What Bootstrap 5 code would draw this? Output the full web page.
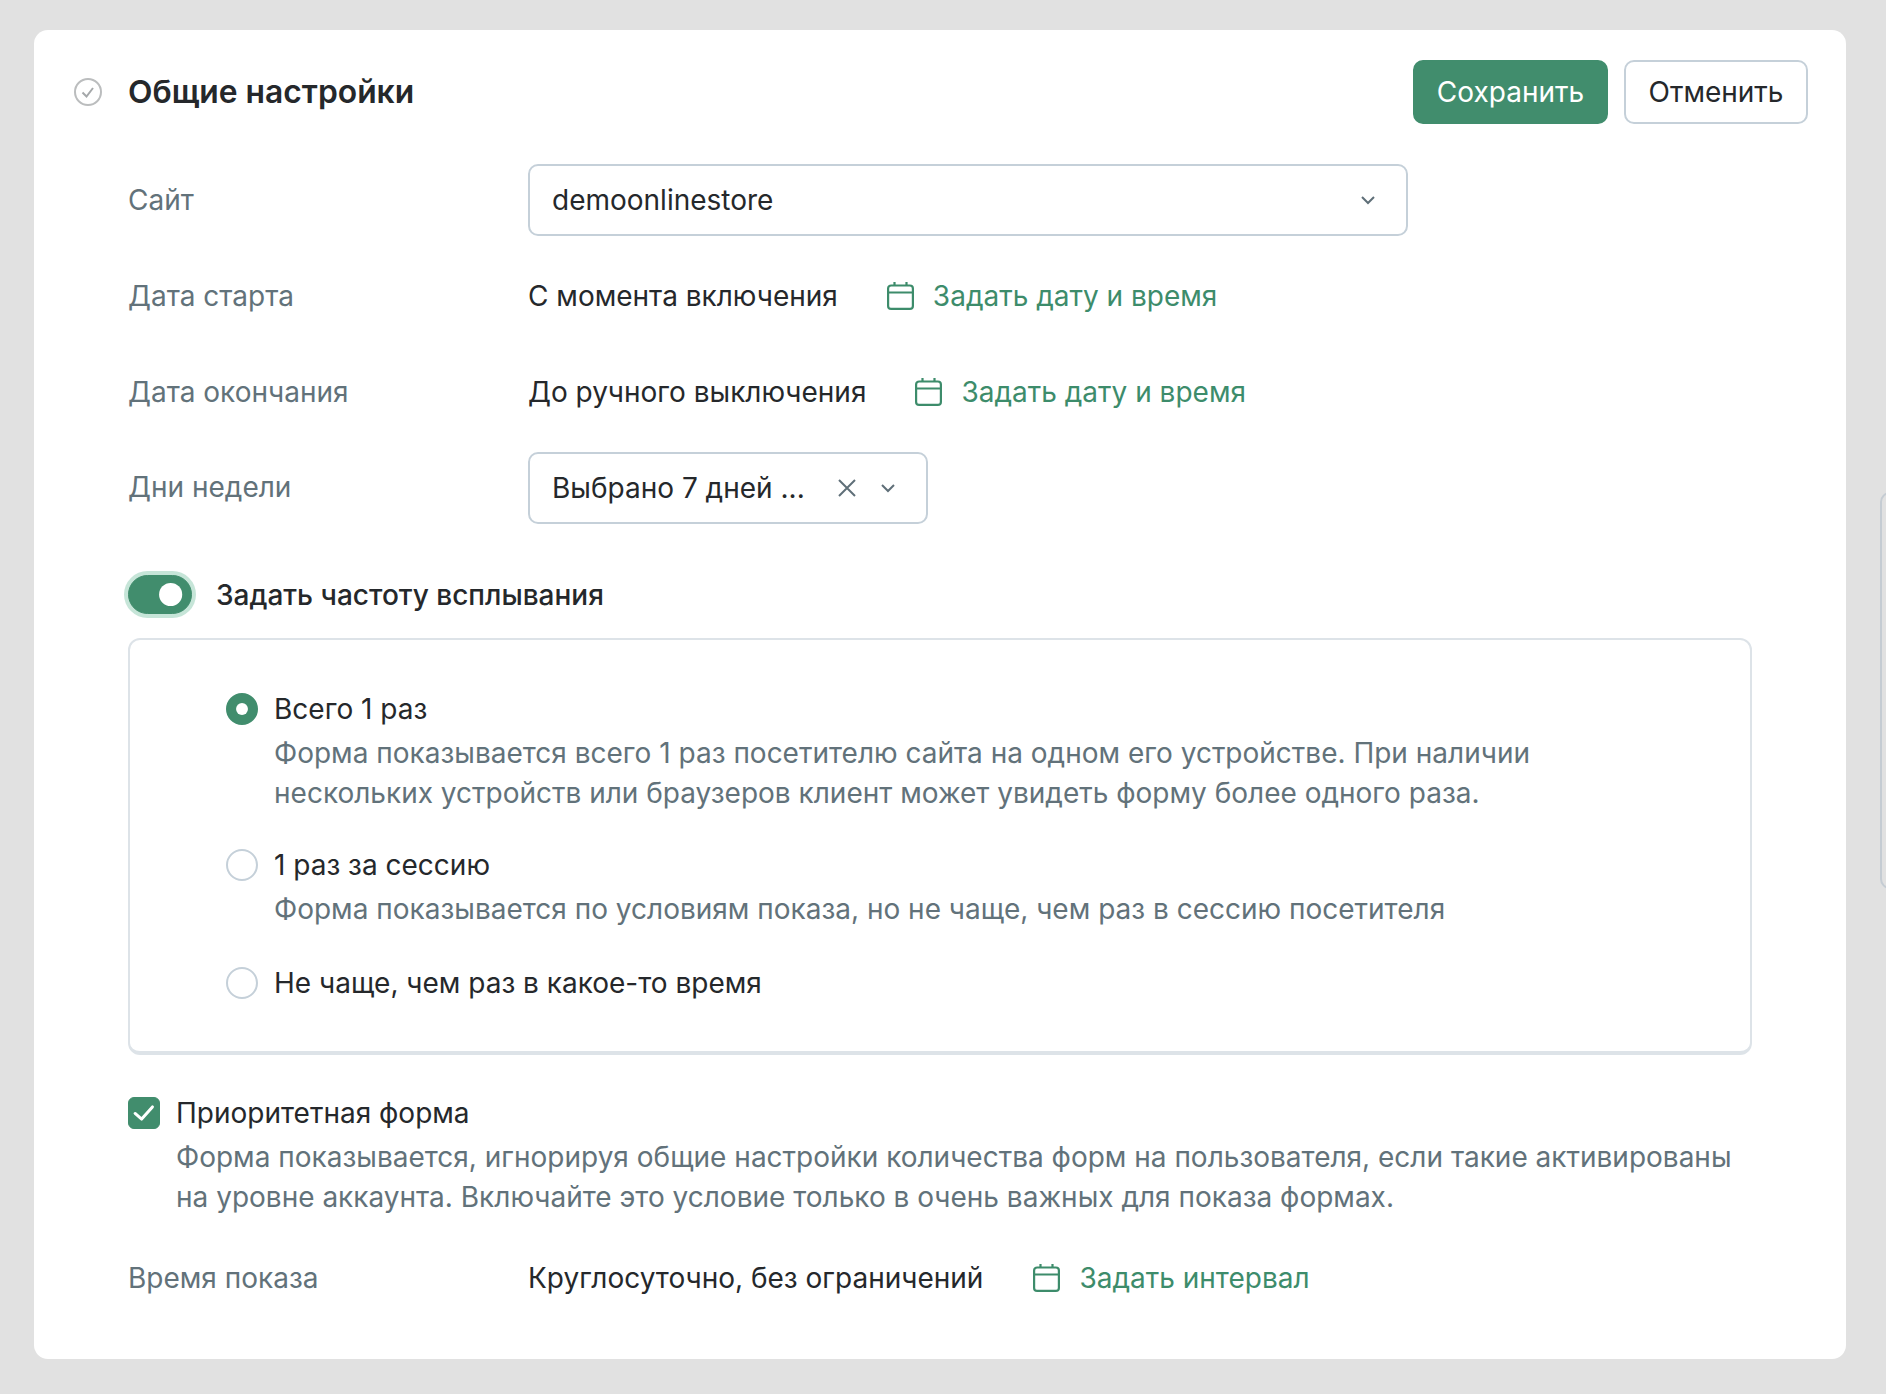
<!DOCTYPE html>
<html lang="ru">
  <head>
    <meta charset="UTF-8" />
    <meta name="viewport" content="width=device-width, initial-scale=1.0" />
    <title>Общие настройки</title>
    <link href="https://cdn.jsdelivr.net/npm/bootstrap@5.3.0/dist/css/bootstrap.min.css" rel="stylesheet" />
    <style>
      body {
        background-color: #e1e1e1;
        font-family: Inter, "Liberation Sans", sans-serif;
        font-size: 28px;
        line-height: 40px;
        color: #25282b;
        min-height: 1394px;
        overflow: hidden;
        position: relative;
      }
      .page-wrap {
        padding: 30px 40px 35px 34px;
      }
      .settings-card {
        background: #fff;
        border-radius: 14px;
        height: 1329px;
        padding: 30px 38px 0 39px;
      }
      .status-icon {
        width: 30px;
        height: 30px;
        margin-right: 25px;
        flex: none;
      }
      .card-title-text {
        font-size: 31.8px;
        font-weight: 600;
        line-height: 64px;
      }
      .btn-save,
      .btn-cancel {
        height: 64px;
        font-size: 28px;
        border-radius: 10px;
        padding: 0 20px;
        line-height: 60px;
      }
      .btn-save {
        background: #418d6d;
        border: 2px solid #418d6d;
        color: #fff;
        width: 195px;
      }
      .btn-cancel {
        background: #fff;
        border: 2px solid #c5d0d9;
        color: #25282b;
        width: 184px;
        margin-left: 16px;
      }
      .setting-row {
        display: flex;
        align-items: center;
        padding-left: 55px;
      }
      .setting-label {
        width: 400px;
        flex: none;
        color: #62727a;
      }
      .fake-select {
        height: 72px;
        border: 2px solid #c5d0d9;
        border-radius: 10px;
        padding: 0 31px 0 22px;
        display: flex;
        align-items: center;
      }
      .select-site { width: 880px; }
      .select-days { width: 400px; }
      .row-site { margin-top: 40px; }
      .row-days .setting-label { padding-bottom: 3px; }
      .row-start { margin-top: 40px; }
      .row-end { margin-top: 56px; }
      .row-days { margin-top: 40px; }
      .date-link {
        color: #3d8c6b;
        text-decoration: none;
        margin-left: 49px;
        display: flex;
        align-items: center;
      }
      .date-link svg { margin-right: 19px; }
      .row-time .date-link { margin-left: 50px; }
      .clear-icon { margin-right: 25px; }
      .freq-row {
        padding-left: 55px;
        margin-top: 47px;
        height: 46px;
      }
      .form-switch .freq-switch {
        width: 64px;
        height: 39px;
        margin: 0;
        background-color: #418d6d;
        border-color: #418d6d;
        box-shadow: 0 0 0 4px #c6e5d8;
        background-image: url("data:image/svg+xml,%3csvg xmlns='http://www.w3.org/2000/svg' viewBox='-4 -4 8 8'%3e%3ccircle cx='-.4' r='2.5' fill='%23fff'/%3e%3c/svg%3e");
        flex: none;
      }
      .freq-label {
        margin-left: 24px;
        font-weight: 500;
        padding-top: 2px;
      }
      .freq-box {
        margin: 21px 0 0 55px;
        width: 1624px;
        height: 417px;
        border: 2px solid #dde3e8;
        border-bottom-width: 4px;
        border-radius: 12px;
        padding: 49px 40px 0 96px;
      }
      .radio-item { display: flex; }
      .radio-item + .radio-item { margin-top: 32px; }
      .radio-item:last-child { margin-top: 34px; }
      .radio-item .form-check-input {
        width: 32px;
        height: 32px;
        margin: 4px 16px 0 0;
        flex: none;
        border: 2px solid #c5d0d9;
      }
      .radio-item .form-check-input:checked {
        background-color: #418d6d;
        border-color: #418d6d;
        background-image: url("data:image/svg+xml,%3csvg xmlns='http://www.w3.org/2000/svg' viewBox='-4 -4 8 8'%3e%3ccircle r='1.7' fill='%23fff'/%3e%3c/svg%3e");
      }
      .opt-note {
        color: #62727a;
        margin-top: 4px;
      }
      .priority-item {
        display: flex;
        padding-left: 55px;
        margin-top: 38px;
      }
      .priority-item .form-check-input {
        width: 32px;
        height: 32px;
        margin: 4px 16px 0 0;
        flex: none;
        border-radius: 6px;
        background-color: #418d6d;
        border-color: #418d6d;
        background-image: url("data:image/svg+xml,%3csvg xmlns='http://www.w3.org/2000/svg' viewBox='0 0 32 32'%3e%3cpath d='M6.500 16.500l7 6 11.500-13' fill='none' stroke='%23fff' stroke-width='3.2' stroke-linecap='round' stroke-linejoin='round'/%3e%3c/svg%3e");
        background-size: 100% 100%;
      }
      .row-time { margin-top: 41px; }
      .side-outline {
        position: absolute;
        left: 1880px;
        top: 492px;
        width: 40px;
        height: 397px;
        border: 2px solid #c5ccd3;
        border-radius: 10px;
      }
    </style>
  </head>
  <body>
    <div class="page-wrap">
      <div class="settings-card">
        <div class="d-flex align-items-center">
          <svg class="status-icon" viewBox="0 0 30 30" fill="none" stroke="#bbbdbe" stroke-width="2">
            <circle cx="15" cy="15" r="13" />
            <path d="M9.500 15.500l4 4 6.500-8.500" stroke="#a5a8aa" />
          </svg>
          <div class="card-title-text flex-grow-1">Общие настройки</div>
          <button class="btn btn-save" type="button">Сохранить</button>
          <button class="btn btn-cancel" type="button">Отменить</button>
        </div>

        <div class="setting-row row-site">
          <div class="setting-label">Сайт</div>
          <div class="fake-select select-site">
            <span class="flex-grow-1">demoonlinestore</span>
            <svg width="14" height="9" viewBox="0 0 14 9" fill="none" stroke="#5f6f78" stroke-width="2"><path d="M1 1l6 6 6-6" /></svg>
          </div>
        </div>

        <div class="setting-row row-start">
          <div class="setting-label">Дата старта</div>
          <span>С момента включения</span>
          <a class="date-link" href="#">
            <svg width="27" height="28" viewBox="0 0 27 28" fill="none" stroke="#3d8c6b" stroke-width="2.2" stroke-linejoin="round"><rect x="1.100" y="3.500" width="24.800" height="23.400" rx="3" /><path d="M1 10.500h25M7.500 0v4M19.500 0v4" /></svg>
            Задать дату и время
          </a>
        </div>

        <div class="setting-row row-end">
          <div class="setting-label">Дата окончания</div>
          <span>До ручного выключения</span>
          <a class="date-link" href="#">
            <svg width="27" height="28" viewBox="0 0 27 28" fill="none" stroke="#3d8c6b" stroke-width="2.2" stroke-linejoin="round"><rect x="1.100" y="3.500" width="24.800" height="23.400" rx="3" /><path d="M1 10.500h25M7.500 0v4M19.500 0v4" /></svg>
            Задать дату и время
          </a>
        </div>

        <div class="setting-row row-days">
          <div class="setting-label">Дни недели</div>
          <div class="fake-select select-days">
            <span class="flex-grow-1">Выбрано 7 дней ...</span>
            <svg class="clear-icon" width="18" height="18" viewBox="0 0 18 18" fill="none" stroke="#5f6f78" stroke-width="2"><path d="M1 1l16 16M17 1L1 17" /></svg>
            <svg width="14" height="9" viewBox="0 0 14 9" fill="none" stroke="#5f6f78" stroke-width="2"><path d="M1 1l6 6 6-6" /></svg>
          </div>
        </div>

        <div class="form-check form-switch d-flex align-items-center freq-row">
          <input class="form-check-input freq-switch" type="checkbox" role="switch" checked />
          <label class="freq-label">Задать частоту всплывания</label>
        </div>

        <div class="freq-box">
          <div class="radio-item">
            <input class="form-check-input" type="radio" name="freq" checked />
            <div>
              <div>Всего 1 раз</div>
              <div class="opt-note">Форма показывается всего 1 раз посетителю сайта на одном его устройстве. При наличии<br />нескольких устройств или браузеров клиент может увидеть форму более одного раза.</div>
            </div>
          </div>
          <div class="radio-item">
            <input class="form-check-input" type="radio" name="freq" />
            <div>
              <div>1 раз за сессию</div>
              <div class="opt-note">Форма показывается по условиям показа, но не чаще, чем раз в сессию посетителя</div>
            </div>
          </div>
          <div class="radio-item">
            <input class="form-check-input" type="radio" name="freq" />
            <div>Не чаще, чем раз в какое-то время</div>
          </div>
        </div>

        <div class="priority-item">
          <input class="form-check-input" type="checkbox" checked />
          <div>
            <div>Приоритетная форма</div>
            <div class="opt-note">Форма показывается, игнорируя общие настройки количества форм на пользователя, если такие активированы<br />на уровне аккаунта. Включайте это условие только в очень важных для показа формах.</div>
          </div>
        </div>

        <div class="setting-row row-time">
          <div class="setting-label">Время показа</div>
          <span>Круглосуточно, без ограничений</span>
          <a class="date-link" href="#">
            <svg width="27" height="28" viewBox="0 0 27 28" fill="none" stroke="#3d8c6b" stroke-width="2.2" stroke-linejoin="round"><rect x="1.100" y="3.500" width="24.800" height="23.400" rx="3" /><path d="M1 10.500h25M7.500 0v4M19.500 0v4" /></svg>
            Задать интервал
          </a>
        </div>
      </div>
    </div>
    <div class="side-outline"></div>
    <script src="https://cdn.jsdelivr.net/npm/bootstrap@5.3.0/dist/js/bootstrap.bundle.min.js"></script>
  </body>
</html>
